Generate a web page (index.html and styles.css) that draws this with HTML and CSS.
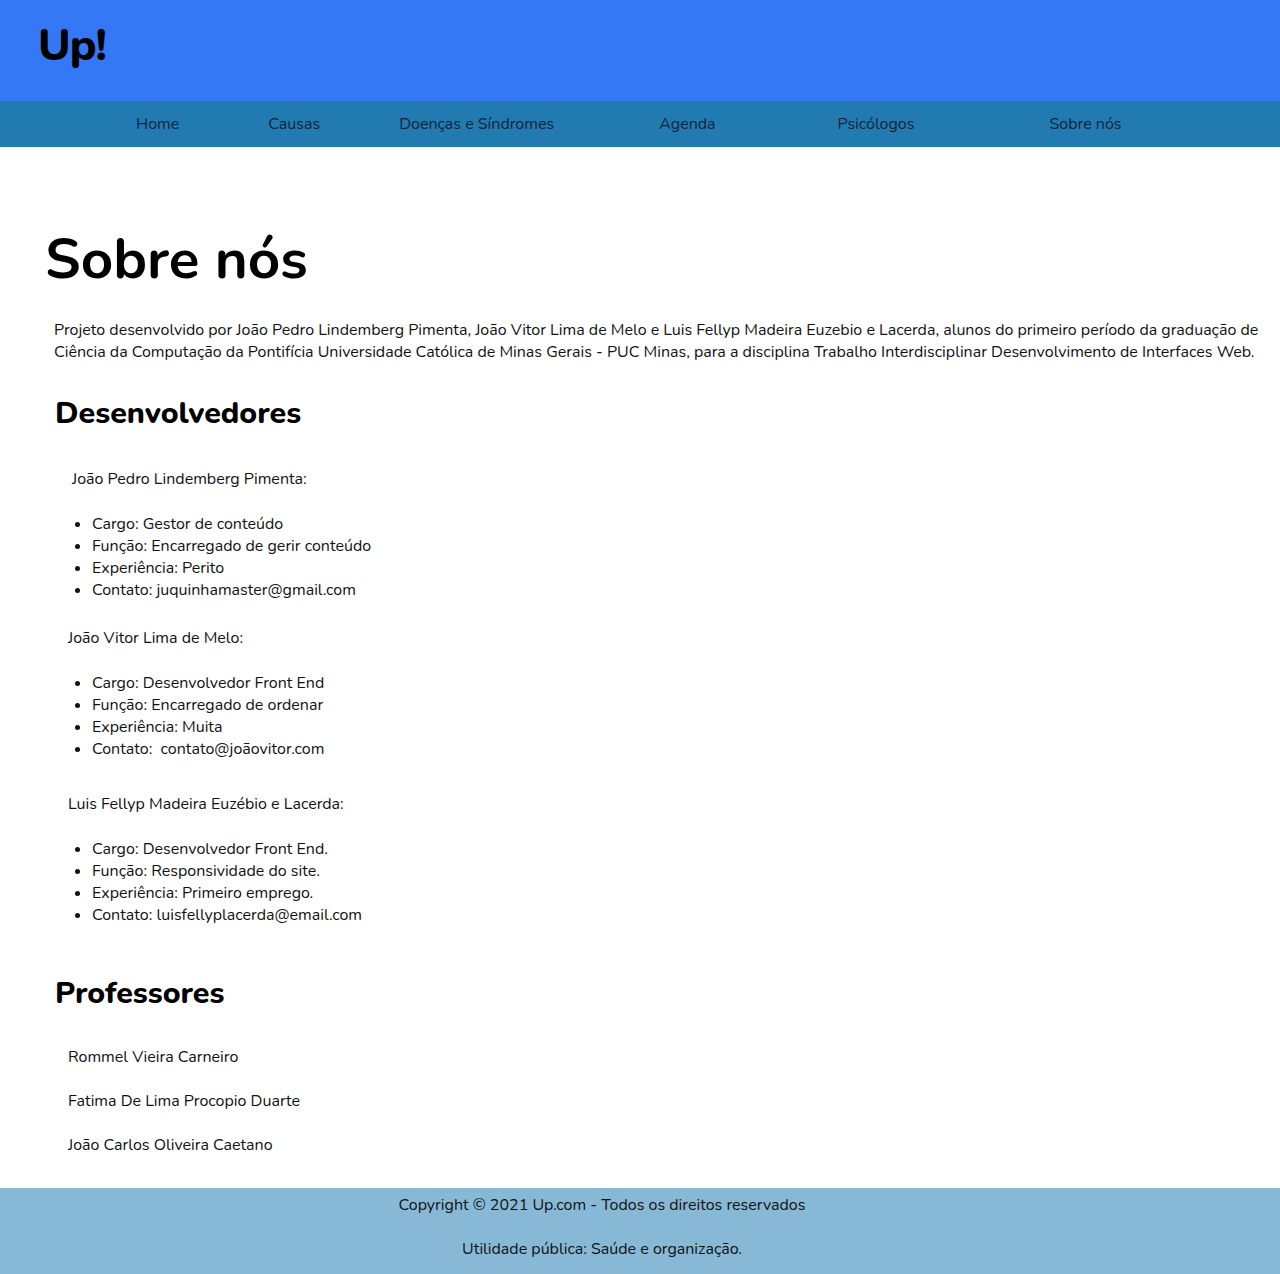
FILE: index.html
```html
<!DOCTYPE html>
<html lang="pt-BR">
<head>
<meta charset="utf-8">
<title>Sobre nós - Up!</title>
<link rel="stylesheet" href="styles.css">
</head>
<body>
<header class="topo">
  <div class="logo">Up!</div>
</header>
<nav class="menu">
  <a class="item i1" href="#">Home</a>
  <a class="item i2" href="#">Causas</a>
  <a class="item i3" href="#">Doenças e Síndromes</a>
  <a class="item i4" href="#">Agenda</a>
  <a class="item i5" href="#">Psicólogos</a>
  <a class="item i6" href="#">Sobre nós</a>
</nav>
<main class="conteudo">
  <h1 class="titulo">Sobre nós</h1>
  <p class="intro">Projeto desenvolvido por João Pedro Lindemberg Pimenta, João Vitor Lima de Melo e Luis Fellyp Madeira Euzebio e Lacerda, alunos do primeiro período da graduação de Ciência da Computação da Pontifícia Universidade Católica de Minas Gerais - PUC Minas, para a disciplina Trabalho Interdisciplinar Desenvolvimento de Interfaces Web.</p>

  <h2 class="secao">Desenvolvedores</h2>

  <p class="nome n1">João Pedro Lindemberg Pimenta:</p>
  <ul class="lista">
    <li>Cargo: Gestor de conteúdo</li>
    <li>Função: Encarregado de gerir conteúdo</li>
    <li>Experiência: Perito</li>
    <li>Contato: juquinhamaster@gmail.com</li>
  </ul>

  <p class="nome">João Vitor Lima de Melo:</p>
  <ul class="lista">
    <li>Cargo: Desenvolvedor Front End</li>
    <li>Função: Encarregado de ordenar</li>
    <li>Experiência: Muita</li>
    <li>Contato:&nbsp; contato@joãovitor.com</li>
  </ul>

  <p class="nome n3">Luis Fellyp Madeira Euzébio e Lacerda:</p>
  <ul class="lista">
    <li>Cargo: Desenvolvedor Front End.</li>
    <li>Função: Responsividade do site.</li>
    <li>Experiência: Primeiro emprego.</li>
    <li>Contato: luisfellyplacerda@email.com</li>
  </ul>

  <h2 class="secao prof">Professores</h2>
  <p class="nome prof-nome">Rommel Vieira Carneiro</p>
  <p class="nome prof-nome">Fatima De Lima Procopio Duarte</p>
  <p class="nome prof-nome">João Carlos Oliveira Caetano</p>
</main>
<footer class="rodape">
  <p>Copyright © 2021 Up.com - Todos os direitos reservados</p>
  <p>Utilidade pública: Saúde e organização.</p>
</footer>
</body>
</html>
```
FILE: styles.css
```css
* { box-sizing: border-box; }
html, body { margin: 0; padding: 0; }
body {
  font-family: "Nunito", "Lato", "Open Sans", sans-serif;
  font-size: 16px;
  color: #111;
  background: #fff;
}
.topo {
  background: #3578f6;
  height: 101px;
  padding: 20px 0 0 38px;
}
.logo {
  font-size: 44px;
  font-weight: 800;
  color: #000;
  line-height: 52px;
  letter-spacing: -1px;
}
.menu {
  background: #217bb1;
  height: 46px;
  display: flex;
  align-items: center;
  padding-left: 136px;
}
.item {
  color: #11233a;
  text-decoration: none;
  font-size: 16px;
}
.i2 { margin-left: 89px; }
.i3 { margin-left: 79px; }
.i4 { margin-left: 105px; }
.i5 { margin-left: 122px; }
.i6 { margin-left: 135px; }
.conteudo {
  padding: 78px 18px 32px 54px;
}
.titulo {
  font-size: 56.5px;
  font-weight: 700;
  margin: 0 0 24px -9px;
  line-height: 70px;
  color: #000;
}
.intro {
  margin: 0;
  line-height: 22px;
  color: #111;
}
.secao {
  font-size: 30.4px;
  font-weight: 800;
  margin: 30px 0 35px 1px;
  line-height: 40px;
  color: #000;
}
.nome {
  margin: 0 0 0 14px;
  line-height: 22px;
}
.n1 { margin-left: 18px; }
.lista {
  margin: 23px 0 26px 0;
  padding-left: 38px;
  line-height: 22px;
}
.n3 { margin-top: 33px; }
.prof { margin-top: 47px; margin-bottom: 33px; }
.prof-nome { margin-bottom: 22px; }
.prof-nome:last-child { margin-bottom: 0; }
.rodape {
  background: #87b9d6;
  height: 86px;
  padding: 6px 76px 0 0;
  text-align: center;
}
.rodape p {
  margin: 0 0 22px;
  line-height: 22px;
}
```
